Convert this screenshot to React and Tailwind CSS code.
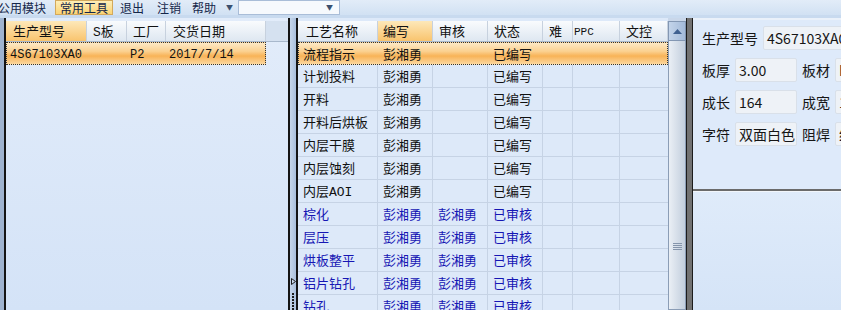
import React from 'react';

const ui = "font-['Noto_Sans_CJK_SC','Noto_Sans',sans-serif]";
const grid = "font-['Liberation_Mono','Noto_Sans_CJK_SC',monospace] text-[13px]";
const hdr = 'bg-[linear-gradient(to_bottom,#f9fbfd,#dee7f1)]';
const hdrOn = 'bg-[linear-gradient(to_bottom,#fde8b9,#f9c46e)]';
const sel = 'bg-[linear-gradient(to_bottom,#fde9c6,#fbd08f_40%,#f8b357_62%,#fcd79e)]';

const midCols = [
    { w: 'w-[80px]', pl: 'pl-[8px]', label: '工艺名称' },
    { w: 'w-[55px]', pl: 'pl-[5px]', label: '编写', on: true },
    { w: 'w-[55px]', pl: 'pl-[6px]', label: '审核' },
    { w: 'w-[55px]', pl: 'pl-[6px]', label: '状态' },
    { w: 'w-[30px]', pl: 'pl-[6px]', label: '难' },
    { w: 'w-[47px]', pl: 'pl-[1px]', label: 'PPC', small: true },
    { w: 'w-[48px]', pl: 'pl-[6px]', label: '文控' },
];

const rows = [
    ['流程指示', '彭湘勇', '', '已编写'],
    ['计划投料', '彭湘勇', '', '已编写'],
    ['开料', '彭湘勇', '', '已编写'],
    ['开料后烘板', '彭湘勇', '', '已编写'],
    ['内层干膜', '彭湘勇', '', '已编写'],
    ['内层蚀刻', '彭湘勇', '', '已编写'],
    ['内层AOI', '彭湘勇', '', '已编写'],
    ['棕化', '彭湘勇', '彭湘勇', '已审核'],
    ['层压', '彭湘勇', '彭湘勇', '已审核'],
    ['烘板整平', '彭湘勇', '彭湘勇', '已审核'],
    ['铝片钻孔', '彭湘勇', '彭湘勇', '已审核'],
    ['钻孔', '彭湘勇', '彭湘勇', '已审核'],
];

function Toolbar() {
    return (
        <div className={`${ui} flex items-center h-[15px] shrink-0 text-[12px] leading-[15px] text-[#14264a] bg-[linear-gradient(to_bottom,#e2ecf8,#d1e1f3)]`}>
            <span className="w-[57px] ml-[-2px] whitespace-nowrap">公用模块</span>
            <span className="w-[58px] h-[15px] flex items-center justify-center border border-[#d3a95c] bg-[linear-gradient(to_bottom,#fdeeb8,#fbd475)]">常用工具</span>
            <span className="w-[37px] pl-[7px]">退出</span>
            <span className="w-[36px] pl-[7px]">注销</span>
            <span className="w-[36px] pl-[6px]">帮助</span>
            <span className="w-[16px] pl-[4px] text-[7px] text-[#3b4f6e]">▼</span>
            <div className="w-[102px] h-[15px] flex items-center justify-end pr-[6px] bg-[#f6f9fd] border border-[#a9bdd8] text-[7px] text-[#3b4f6e]">▼</div>
        </div>
    );
}

function LeftPanel() {
    return (
        <div className={`${grid} w-[286px] flex flex-col overflow-hidden border-x-2 border-[#141414] pt-[3px] bg-[linear-gradient(to_bottom,#e2ecfa,#d4e3f7)]`}>
            <div className="flex h-[21px] shrink-0 border-b border-[#a8b8cc] text-[#111]">
                <div className={`${hdrOn} w-[81px] pl-[7px] pt-[3px] flex items-center border-r border-[#c7d1de]`}>生产型号</div>
                <div className={`${hdr} w-[40px] pl-[6px] pt-[3px] flex items-center border-r border-[#c7d1de]`}>S板</div>
                <div className={`${hdr} w-[39px] pl-[6px] pt-[3px] flex items-center border-r border-[#c7d1de]`}>工厂</div>
                <div className={`${hdr} w-[100px] pl-[7px] pt-[3px] flex items-center border-r border-[#c7d1de]`}>交货日期</div>
                <div className="flex-1 bg-[#d5e1f0]" />
            </div>
            <div className={`${sel} w-[260px] h-[23px] shrink-0 flex items-center pt-[3px] border border-dotted border-[#333] text-[12px] text-[#111]`}>
                <span className="w-[80px] pl-[3px]">4S67103XA0</span>
                <span className="w-[40px]" />
                <span className="w-[39px] pl-[3px]">P2</span>
                <span className="pl-[3px]">2017/7/14</span>
            </div>
        </div>
    );
}

function Splitter() {
    return (
        <div className="w-[6px] flex flex-col items-center pt-[260px] bg-[linear-gradient(to_right,#c6d6eb,#a9bfdc)]">
            <svg width="5" height="7" viewBox="0 0 5 7" className="shrink-0">
                <path d="M0.5 0.5 L4.5 3.5 L0.5 6.5 Z" fill="#c9d8ec" stroke="#1b1b1b" strokeWidth="1" />
            </svg>
            <svg width="3" height="24" viewBox="0 0 3 24" className="mt-[8px] shrink-0">
                {[0, 3, 6, 9, 12, 15, 18, 21].map((y) => (
                    <rect key={y} x="0" y={y} width="2" height="2" fill="#1b1b1b" />
                ))}
            </svg>
        </div>
    );
}

function MidGrid() {
    const cell = 'pt-[4px] flex items-center';
    return (
        <div className={`${grid} w-[372px] flex flex-col overflow-hidden border-l-2 border-[#141414] pt-[3px] bg-[#dde9f9]`}>
            <div className="flex h-[21px] shrink-0 border-b border-[#a8b8cc] text-[#111]">
                {midCols.map((c) => (
                    <div key={c.label} className={`${c.w} ${c.pl} ${c.on ? hdrOn : hdr} ${c.small ? 'text-[11px]' : ''} pt-[3px] flex items-center border-r border-[#c7d1de]`}>
                        {c.label}
                    </div>
                ))}
            </div>
            {rows.map((r, i) => {
                const blue = r[3] === '已审核';
                const color = blue ? 'text-[#1616b4]' : 'text-[#111]';
                if (i === 0) {
                    return (
                        <div key={i} className={`${sel} flex h-[23px] shrink-0 border border-dotted border-[#333] ${color}`}>
                            <div className={`${cell} w-[79px] pl-[4px]`}>{r[0]}</div>
                            <div className={`${cell} w-[55px] pl-[5px]`}>{r[1]}</div>
                            <div className={`${cell} w-[55px] pl-[5px]`}>{r[2]}</div>
                            <div className={`${cell} w-[55px] pl-[5px]`}>{r[3]}</div>
                        </div>
                    );
                }
                return (
                    <div key={i} className={`flex h-[23px] shrink-0 border-b border-[#c6d3e5] ${color}`}>
                        <div className={`${cell} w-[80px] pl-[5px] border-r border-[#c6d3e5] whitespace-nowrap`}>{r[0]}</div>
                        <div className={`${cell} w-[55px] pl-[5px] border-r border-[#c6d3e5]`}>{r[1]}</div>
                        <div className={`${cell} w-[55px] pl-[5px] border-r border-[#c6d3e5]`}>{r[2]}</div>
                        <div className={`${cell} w-[55px] pl-[5px] border-r border-[#c6d3e5]`}>{r[3]}</div>
                        <div className="w-[30px] border-r border-[#c6d3e5]" />
                        <div className="w-[47px] border-r border-[#c6d3e5]" />
                        <div className="w-[48px]" />
                    </div>
                );
            })}
        </div>
    );
}

function ScrollBar() {
    return (
        <div className="w-[18px] flex flex-col pt-[3px] bg-[#c9d7ea]">
            <div className="h-[20px] shrink-0 flex items-center justify-center border border-[#8397b3] bg-[linear-gradient(to_right,#c3d4ea,#a3bad9)]">
                <svg width="9" height="5" viewBox="0 0 9 5">
                    <path d="M0 5 L4.5 0 L9 5 Z" fill="#3f6090" />
                </svg>
            </div>
            <div className="flex-1 flex flex-col items-center pt-[202px] border-x border-b border-[#8b9db6] bg-[linear-gradient(to_right,#eaeff5,#c2cedd)]">
                <div className="w-[9px] flex flex-col gap-[1px]">
                    <div className="h-px bg-[#8595ab]" />
                    <div className="h-px bg-[#8595ab]" />
                    <div className="h-px bg-[#8595ab]" />
                    <div className="h-px bg-[#8595ab]" />
                </div>
            </div>
        </div>
    );
}

function Field({ label, value, w }) {
    return (
        <>
            <span className="shrink-0">{label}</span>
            <div className={`${w} shrink-0 h-[24px] px-[3px] leading-[22px] whitespace-nowrap overflow-hidden rounded-[2px] border border-[#d9e0e9] bg-[#eef2f7]`}>
                {value}
            </div>
        </>
    );
}

function RightPanel() {
    return (
        <div className={`${ui} w-[148px] flex flex-col overflow-hidden text-[14px] text-[#151515]`}>
            <div className="h-[171px] shrink-0 flex flex-col gap-[8px] pt-[6px] pl-[9px] border-t-2 border-[#eaf1fa] bg-[#deeafa]">
                <div className="flex items-center gap-[5px] h-[24px]">
                    <Field label="生产型号" value="4S67103XA0" w="w-[90px]" />
                </div>
                <div className="flex items-center gap-[5px] h-[24px]">
                    <Field label="板厚" value="3.00" w="w-[62px]" />
                    <Field label="板材" value="FR4" w="w-[60px]" />
                </div>
                <div className="flex items-center gap-[5px] h-[24px]">
                    <Field label="成长" value="164" w="w-[62px]" />
                    <Field label="成宽" value="120" w="w-[60px]" />
                </div>
                <div className="flex items-center gap-[5px] h-[24px]">
                    <Field label="字符" value="双面白色" w="w-[62px]" />
                    <Field label="阻焊" value="绿色" w="w-[60px]" />
                </div>
            </div>
            <div className="h-[2px] shrink-0 bg-[#6b6b6b]" />
            <div className="flex-1 border-t border-[#f2f6fb] bg-[linear-gradient(to_bottom,#dfebfa,#d5e4f7)]" />
        </div>
    );
}

export default function App() {
    return (
        <div className="w-[841px] h-[310px] overflow-hidden flex flex-col bg-[#c6d8ee]">
            <Toolbar />
            <div className="h-[3px] shrink-0 bg-[#c8daef]" />
            <div className="flex flex-1 min-h-0">
                <div className="w-[4px] bg-[#9fb3cf]" />
                <LeftPanel />
                <Splitter />
                <MidGrid />
                <ScrollBar />
                <div className="w-[7px] border-x border-[#1c1c1c] bg-[#727272]" />
                <RightPanel />
            </div>
        </div>
    );
}
